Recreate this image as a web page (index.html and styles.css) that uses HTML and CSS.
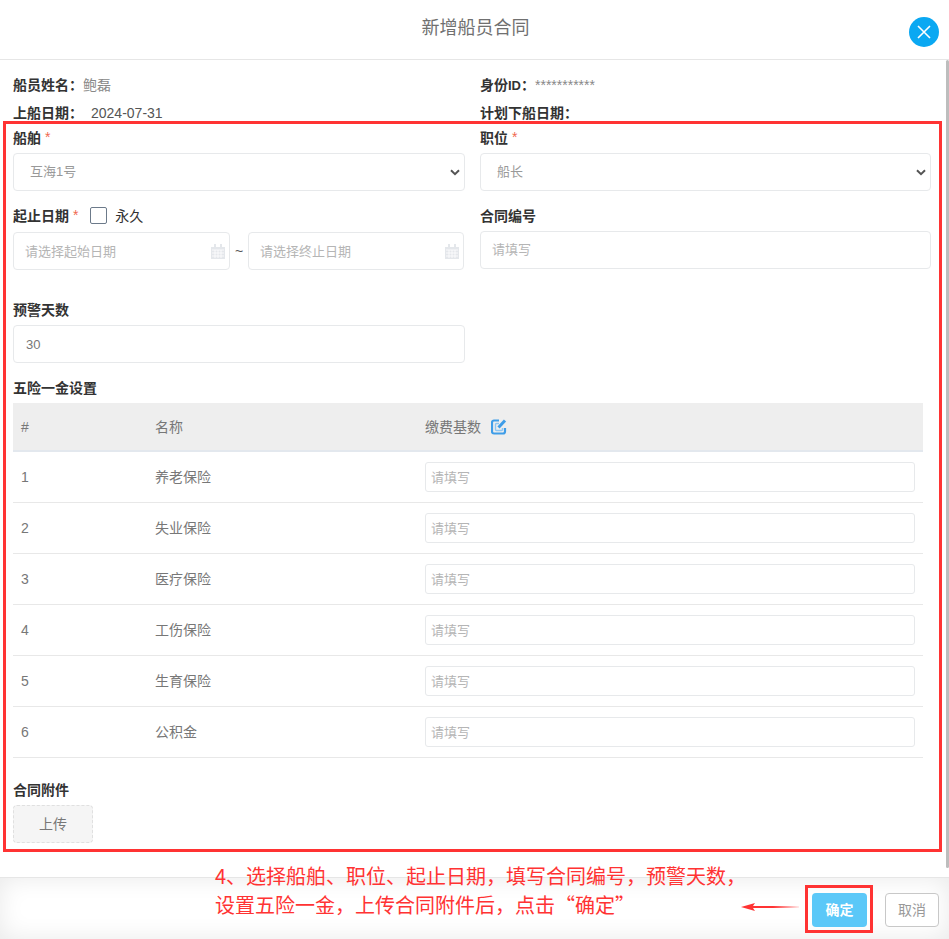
FILE: index.html
```html
<!DOCTYPE html>
<html lang="zh-CN">
<head>
  <meta charset="UTF-8">
  <meta name="viewport" content="width=device-width, initial-scale=1.0">
  <title>新增船员合同</title>
  <link rel="stylesheet" href="styles.css">
</head>
<body>
  <div class="modal">
    <header class="modal-header">
      <h1>新增船员合同</h1>
      <button class="close-btn" type="button" aria-label="关闭">
        <svg width="16" height="16" viewBox="0 0 16 16"><path d="M2 2l12 12M14 2L2 14" stroke="#fff" stroke-width="1.6" fill="none"/></svg>
      </button>
    </header>

    <div class="modal-body">
      <div class="info-row">
        <div><b>船员姓名：</b><span class="muted">鲍磊</span></div>
        <div><b>身份<span class="id-text">ID</span>：</b><span class="muted stars">***********</span></div>
      </div>
      <div class="info-row">
        <div><b>上船日期：</b><span class="date-value">2024-07-31</span></div>
        <div><b>计划下船日期：</b></div>
      </div>

      <div class="form-row row-ship">
        <div>
          <label class="field-label">船舶 <i>*</i></label>
          <select class="control"><option>互海1号</option></select>
        </div>
        <div>
          <label class="field-label">职位 <i>*</i></label>
          <select class="control"><option>船长</option></select>
        </div>
      </div>

      <div class="form-row row-date">
        <div>
          <label class="field-label">起止日期 <i>*</i><span class="check-box"></span><span class="check-text">永久</span></label>
          <div class="date-range">
            <div class="date-input">
              <span>请选择起始日期</span>
              <svg width="14" height="15" viewBox="0 0 14 15"><path d="M0 3h14v12H0z" fill="#e4e7eb"/><path d="M3 0h2v4H3zM9 0h2v4H9z" fill="#e4e7eb"/><path d="M1 6h12M1 9h12M1 12h12M4 6v8M7 6v8M10 6v8" stroke="#fff" stroke-width=".8"/></svg>
            </div>
            <span class="tilde">~</span>
            <div class="date-input">
              <span>请选择终止日期</span>
              <svg width="14" height="15" viewBox="0 0 14 15"><path d="M0 3h14v12H0z" fill="#e4e7eb"/><path d="M3 0h2v4H3zM9 0h2v4H9z" fill="#e4e7eb"/><path d="M1 6h12M1 9h12M1 12h12M4 6v8M7 6v8M10 6v8" stroke="#fff" stroke-width=".8"/></svg>
            </div>
          </div>
        </div>
        <div>
          <label class="field-label">合同编号</label>
          <input class="control" type="text" placeholder="请填写">
        </div>
      </div>

      <div class="form-row row-warn">
        <div>
          <label class="field-label">预警天数</label>
          <input class="control" type="text" value="30">
        </div>
      </div>

      <label class="field-label">五险一金设置</label>
      <table class="fund-table">
        <thead>
          <tr>
            <th class="col-no">#</th>
            <th class="col-name">名称</th>
            <th class="col-base">缴费基数
              <svg class="edit-icon" width="16" height="16" viewBox="0 0 16 16">
                <path d="M8 4.500H5.500a1 1 0 0 0-1 1v5a1 1 0 0 0 1 1h5a1 1 0 0 0 1-1V9" fill="none" stroke="#8ec6f2" stroke-width="1.400"/>
                <path d="M8 1.500H3A2 2 0 0 0 1 3.500v9A2 2 0 0 0 3 14.500h9a2 2 0 0 0 2-2V9" fill="none" stroke="#3f9de8" stroke-width="2.200"/>
                <path d="M14 1.500L7.500 8.500" fill="none" stroke="#3f9de8" stroke-width="3"/>
              </svg>
            </th>
          </tr>
        </thead>
        <tbody>
          <tr><td>1</td><td class="name-cell">养老保险</td><td><input class="cell-input" type="text" placeholder="请填写"></td></tr>
          <tr><td>2</td><td class="name-cell">失业保险</td><td><input class="cell-input" type="text" placeholder="请填写"></td></tr>
          <tr><td>3</td><td class="name-cell">医疗保险</td><td><input class="cell-input" type="text" placeholder="请填写"></td></tr>
          <tr><td>4</td><td class="name-cell">工伤保险</td><td><input class="cell-input" type="text" placeholder="请填写"></td></tr>
          <tr><td>5</td><td class="name-cell">生育保险</td><td><input class="cell-input" type="text" placeholder="请填写"></td></tr>
          <tr><td>6</td><td class="name-cell">公积金</td><td><input class="cell-input" type="text" placeholder="请填写"></td></tr>
        </tbody>
      </table>

      <label class="field-label attach-label">合同附件</label>
      <button class="upload-btn" type="button">上传</button>

      <div class="scroll-thumb"></div>
    </div>

    <footer class="modal-footer">
      <button class="btn btn-ok" type="button">确定</button>
      <button class="btn btn-cancel" type="button">取消</button>
    </footer>
  </div>

  <!-- annotation layer -->
  <div class="mark mark-form"></div>
  <div class="mark mark-ok"></div>
  <p class="note">4、选择船舶、职位、起止日期，填写合同编号，预警天数，<br>设置五险一金，上传合同附件后，点击“确定”</p>
  <svg class="note-arrow" width="60" height="10" viewBox="0 0 60 10">
    <defs>
      <linearGradient id="arrowFade" x1="0" x2="1" y1="0" y2="0">
        <stop offset="0" stop-color="#f33"/>
        <stop offset=".55" stop-color="#f33"/>
        <stop offset="1" stop-color="#f33" stop-opacity=".1"/>
      </linearGradient>
    </defs>
    <path d="M0 5l14-4-2 3h46v2H12l2 3z" fill="url(#arrowFade)"/>
  </svg>
</body>
</html>
```
FILE: styles.css
```css
* {
  box-sizing: border-box;
}
body {
  margin: 0;
  background: #fff;
  color: #333;
  font-family: "Liberation Sans", "Noto Sans CJK SC", sans-serif;
  font-size: 14px;
}
.modal {
  display: flex;
  flex-direction: column;
  height: 939px;
  overflow: hidden;
}
.modal-header {
  display: flex;
  justify-content: center;
  flex: 0 0 60px;
  padding: 15px 0 0 2px;
  border-bottom: 1px solid #e6e6e6;
  position: relative;
}
.modal-header h1 {
  margin: 0;
  font-size: 18px;
  font-weight: normal;
  line-height: 26px;
  color: #707070;
}
.close-btn {
  position: absolute;
  left: 909px;
  top: 17px;
  display: flex;
  align-items: center;
  justify-content: center;
  width: 30px;
  height: 30px;
  padding: 0;
  border: 0;
  border-radius: 50%;
  background: #0aa8f2;
}
.modal-body {
  flex: 1;
  padding: 11px 0 0 13px;
  position: relative;
}
.scroll-thumb {
  position: absolute;
  right: 0;
  top: 0;
  width: 3px;
  height: 808px;
  border-radius: 2px;
  background: #bdbdbd;
}
.info-row {
  display: grid;
  grid-template-columns: 452px 451px;
  column-gap: 15px;
  height: 28px;
  line-height: 28px;
}
.id-text {
  font-size: 13px;
}
.muted {
  color: #888;
}
.date-value {
  margin-left: 8px;
  color: #555;
}
.form-row {
  display: grid;
  grid-template-columns: 452px 451px;
  column-gap: 15px;
}
.row-ship {
  margin-bottom: 14px;
}
.row-date {
  margin-bottom: 29px;
}
.row-warn {
  margin-bottom: 14px;
}
.field-label {
  display: flex;
  align-items: center;
  height: 22px;
  margin-bottom: 4px;
  padding-bottom: 2px;
  font-weight: bold;
  white-space: pre;
}
.field-label i {
  font-style: normal;
  font-weight: normal;
  color: #f0694f;
}
.check-box {
  width: 17px;
  height: 17px;
  margin-left: 12px;
  border: 1px solid #6c7a8a;
  border-radius: 2px;
}
.check-text {
  margin-left: 8px;
  font-weight: normal;
}
.control {
  display: block;
  width: 100%;
  height: 38px;
  padding: 0 11px 2px;
  border: 1px solid #e7e9eb;
  border-radius: 4px;
  background-color: #fff;
  color: #777;
  font-family: inherit;
  font-size: 13px;
  outline: none;
}
input.control[value] {
  padding: 0 12px;
}
select.control {
  appearance: none;
  padding-left: 16px;
  background-image: url("data:image/svg+xml,%3Csvg xmlns='http://www.w3.org/2000/svg' width='10' height='7' viewBox='0 0 10 7'%3E%3Cpath d='M1 1.200l4 4 4-4' fill='none' stroke='%23555' stroke-width='2'/%3E%3C/svg%3E");
  background-repeat: no-repeat;
  background-position: right 4px center;
  color: #999;
}
input::placeholder {
  color: #b5b5b5;
}
.date-range {
  display: flex;
  align-items: center;
  margin-top: 5px;
  margin-right: 1px;
}
.date-input {
  display: flex;
  align-items: center;
  justify-content: space-between;
  width: 217px;
  height: 38px;
  padding: 0 4px 0 12px;
  border: 1px solid #e7e9eb;
  border-radius: 4px;
  color: #b5b5b5;
  font-size: 13px;
}
.date-input span {
  margin-bottom: 2px;
  margin-left: -1px;
}
.date-input + .tilde + .date-input {
  width: 216px;
}
.tilde {
  width: 18px;
  text-align: center;
  color: #555;
}
.fund-table {
  width: 910px;
  border-collapse: collapse;
  table-layout: fixed;
}
.fund-table th {
  height: 48px;
  padding: 0 8px;
  border-bottom: 2px solid #e3e8ee;
  background: #eee;
  color: #777;
  font-weight: normal;
  text-align: left;
}
.fund-table .col-name,
.fund-table .col-base {
  padding-bottom: 2px;
}
.col-no {
  width: 134px;
}
.col-name {
  width: 270px;
}
.edit-icon {
  margin-left: 6px;
  vertical-align: -3px;
}
.fund-table td {
  height: 51px;
  padding: 0 8px;
  border-bottom: 1px solid #e8e8e8;
  color: #777;
}
.fund-table .name-cell {
  padding-bottom: 2px;
}
.cell-input {
  display: block;
  width: 100%;
  height: 30px;
  padding: 2px 5px 0;
  border: 1px solid #e7e9eb;
  border-radius: 3px;
  font-family: inherit;
  font-size: 13px;
  outline: none;
}
.attach-label {
  margin-top: 21px;
}
.upload-btn {
  display: block;
  width: 80px;
  height: 38px;
  padding: 0 0 2px;
  border: 1px dashed #e0e0e0;
  border-radius: 4px;
  background: #f5f5f5;
  color: #777;
  font-family: inherit;
  font-size: 14px;
}
.modal-footer {
  display: flex;
  flex: 0 0 62px;
  justify-content: flex-end;
  gap: 18px;
  padding: 15px 10px 0 0;
  border-top: 1px solid #e6e6e6;
  background: #fff;
  box-shadow: inset 0 0 24px rgba(0, 0, 0, .09);
}
.btn {
  height: 34px;
  padding: 0 0 3px;
  border-radius: 4px;
  font-family: inherit;
  font-size: 14px;
}
.btn-ok {
  width: 55px;
  border: 0;
  background: #5bc8f8;
  color: #fff;
  font-weight: bold;
}
.btn-cancel {
  width: 54px;
  border: 1px solid #c8c8c8;
  background: #fff;
  color: #999;
}
.mark {
  position: absolute;
  border: 3px solid #f33;
}
.mark-form {
  left: 3px;
  top: 121px;
  width: 939px;
  height: 731px;
}
.mark-ok {
  left: 805px;
  top: 885px;
  width: 68px;
  height: 48px;
}
.note {
  position: absolute;
  left: 215px;
  top: 861px;
  margin: 0;
  color: #f33;
  font-family: "Noto Sans CJK SC", sans-serif;
  font-size: 20px;
  line-height: 29px;
  white-space: nowrap;
}
.note-arrow {
  position: absolute;
  left: 741px;
  top: 902px;
}
```
